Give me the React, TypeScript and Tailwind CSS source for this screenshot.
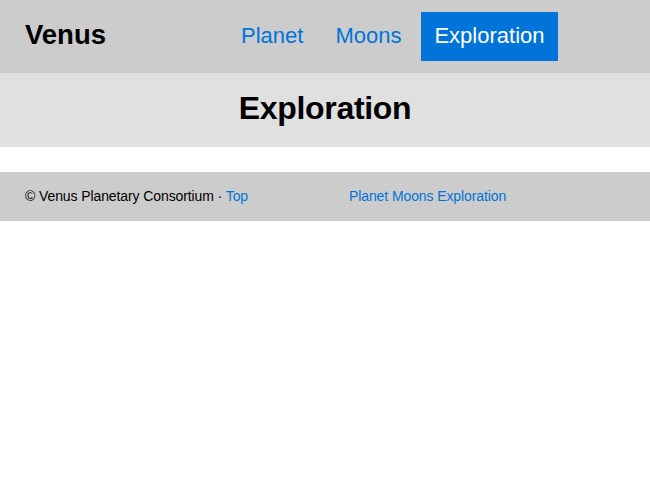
import React from "react";

export default function App() {
  const font = { fontFamily: '"Liberation Sans", Arial, sans-serif' };
  return (
    <div style={font} className="w-[650px] text-black">
      <header className="h-[73px] bg-[#cccccc] flex items-center">
        <div className="w-[229px] pl-[25px] pb-[3px] text-[27.5px] font-bold leading-none">Venus</div>
        <nav className="flex items-center gap-[8px] text-[22px]">
          <a className="px-[12px] h-[49px] pb-[3px] flex items-center text-[#0074d9]">Planet</a>
          <a className="px-[12px] h-[49px] pb-[3px] flex items-center text-[#0074d9]">Moons</a>
          <a className="px-[13px] h-[49px] pb-[3px] flex items-center bg-[#0074d9] text-white">Exploration</a>
        </nav>
      </header>
      <section className="h-[74px] bg-[#e0e0e0] flex items-center justify-center">
        <h1 className="text-[32px] pb-[4px] font-bold leading-none tracking-[-0.3px]">Exploration</h1>
      </section>
      <div className="h-[25px]" />
      <footer className="h-[49px] bg-[#cccccc] flex items-center text-[14px] tracking-[-0.1px]">
        <div className="w-[349px] pl-[25px]">
          © Venus Planetary Consortium · <a className="text-[#0074d9]">Top</a>
        </div>
        <div className="text-[#0074d9]">Planet Moons Exploration</div>
      </footer>
    </div>
  );
}
